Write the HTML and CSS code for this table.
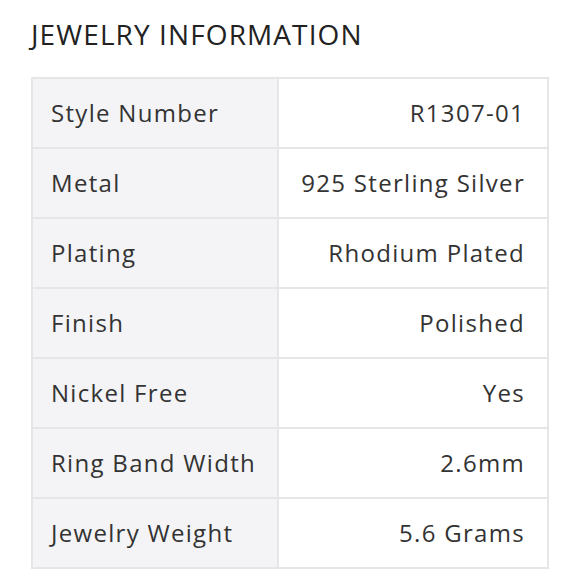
FILE: index.html
```html
<!DOCTYPE html>
<html>
<head>
<meta charset="utf-8">
<link rel="stylesheet" href="styles.css">
</head>
<body>
<div class="wrap">
  <h2 class="title">JEWELRY INFORMATION</h2>
  <table class="info">
    <tr><th>Style Number</th><td>R1307-01</td></tr>
    <tr><th>Metal</th><td>925 Sterling Silver</td></tr>
    <tr><th>Plating</th><td>Rhodium Plated</td></tr>
    <tr><th>Finish</th><td>Polished</td></tr>
    <tr><th>Nickel Free</th><td>Yes</td></tr>
    <tr><th>Ring Band Width</th><td>2.6mm</td></tr>
    <tr><th>Jewelry Weight</th><td>5.6 Grams</td></tr>
  </table>
</div>
</body>
</html>
```
FILE: styles.css
```css
html, body {
  margin: 0;
  padding: 0;
  background: #ffffff;
}
.wrap {
  padding: 18px 31px 0 31px;
}
.title {
  margin: 0 0 27px 0;
  font-family: "Open Sans", sans-serif;
  font-weight: 400;
  font-size: 28px;
  line-height: 32px;
  letter-spacing: 1.1px;
  color: #222222;
}
.info {
  width: 518px;
  border-collapse: collapse;
  font-family: "Open Sans", sans-serif;
  font-size: 24px;
  letter-spacing: 1.3px;
  color: #333333;
}
.info th, .info td {
  height: 66px;
  border: 2px solid #e6e6e8;
  padding: 0 0 2px 0;
  font-weight: 400;
}
.info th {
  width: 226px;
  text-align: left;
  padding-left: 18px;
  background: #f4f4f6;
}
.info td {
  text-align: right;
  padding-right: 22px;
  background: #ffffff;
}
```
